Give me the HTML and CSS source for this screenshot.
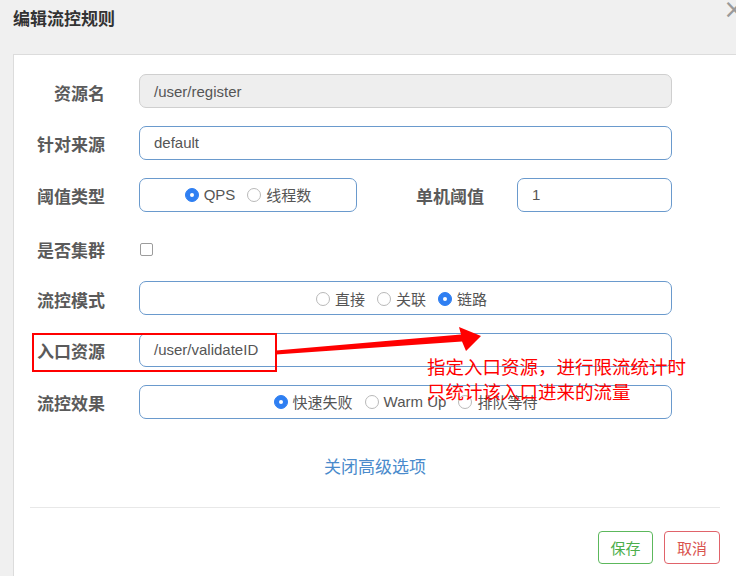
FILE: index.html
```html
<!DOCTYPE html>
<html lang="zh">
<head>
<meta charset="utf-8">
<title>编辑流控规则</title>
<link rel="stylesheet" href="styles.css">
</head>
<body>
<div class="page">
  <div class="header">
    <h4 class="title">编辑流控规则</h4>
    <span class="close">×</span>
  </div>
  <div class="card">
    <div class="form">
      <div class="row">
        <label class="lbl">资源名</label>
        <div class="input disabled">/user/register</div>
      </div>
      <div class="row">
        <label class="lbl">针对来源</label>
        <div class="input">default</div>
      </div>
      <div class="row">
        <label class="lbl">阈值类型</label>
        <div class="group small">
          <span class="radio on"></span><span class="opt">QPS</span>
          <span class="radio"></span><span class="opt">线程数</span>
        </div>
        <label class="lbl2">单机阈值</label>
        <div class="input short">1</div>
      </div>
      <div class="row">
        <label class="lbl lbl-low">是否集群</label>
        <span class="checkbox"></span>
      </div>
      <div class="row">
        <label class="lbl">流控模式</label>
        <div class="group mode">
          <span class="radio"></span><span class="opt">直接</span>
          <span class="radio"></span><span class="opt">关联</span>
          <span class="radio on"></span><span class="opt">链路</span>
        </div>
      </div>
      <div class="row">
        <label class="lbl">入口资源</label>
        <div class="input">/user/validateID</div>
      </div>
      <div class="row">
        <label class="lbl">流控效果</label>
        <div class="group">
          <span class="radio on"></span><span class="opt">快速失败</span>
          <span class="radio"></span><span class="opt">Warm Up</span>
          <span class="radio"></span><span class="opt">排队等待</span>
        </div>
      </div>
    </div>
    <div class="adv"><a class="adv-link">关闭高级选项</a></div>
    <hr class="sep">
    <div class="footer">
      <button class="btn save">保存</button>
      <button class="btn cancel">取消</button>
    </div>
  </div>

  <div class="mark-box"></div>
  <svg class="arrow" width="736" height="576" viewBox="0 0 736 576" xmlns="http://www.w3.org/2000/svg">
    <polygon points="276,350.5 461,334.5 459,327 481,336 466,351 462,341.5 276,354.5" fill="#ff0000"/>
  </svg>
  <div class="note">指定入口资源，进行限流统计时<br>只统计该入口进来的流量</div>
</div>
</body>
</html>
```

FILE: styles.css
```css
* { box-sizing: border-box; }

body {
  margin: 0;
  width: 736px;
  height: 576px;
  overflow: hidden;
  background: #f0f0f0;
  font-family: "Liberation Sans", "Noto Sans CJK SC", sans-serif;
  color: #555;
}

.page {
  position: relative;
  width: 736px;
  height: 576px;
  display: flex;
  flex-direction: column;
}

.header {
  position: relative;
  flex: none;
  height: 54px;
  padding-left: 13px;
}

.title {
  margin: 0;
  padding-top: 8px;
  font-size: 17px;
  line-height: 20px;
  font-weight: bold;
  color: #333;
  font-family: "Noto Sans CJK SC", sans-serif;
}

.close {
  position: absolute;
  right: -9px;
  top: -4px;
  font-size: 26px;
  line-height: 26px;
  color: #9a9a9a;
  font-family: "DejaVu Sans", sans-serif;
}

.card {
  flex: 1;
  margin-left: 13px;
  background: #fff;
  border-left: 1px solid #dcdcdc;
  border-top: 1px solid #dcdcdc;
  padding-top: 19px;
}

.form {
  display: flex;
  flex-direction: column;
  gap: 17.8px;
}

.row {
  display: flex;
  align-items: center;
  height: 34px;
}

.lbl {
  flex: none;
  width: 125px;
  padding-right: 34px;
  padding-top: 2px;
  text-align: right;
  font-size: 17px;
  font-weight: bold;
  color: #5a5a5a;
  font-family: "Noto Sans CJK SC", sans-serif;
}

.lbl-low { padding-top: 6px; }

.lbl2 {
  flex: none;
  width: 160px;
  padding-right: 33px;
  padding-top: 2px;
  text-align: right;
  font-size: 17px;
  font-weight: bold;
  color: #5a5a5a;
  font-family: "Noto Sans CJK SC", sans-serif;
}

.input {
  width: 533px;
  height: 34px;
  border: 1px solid #6a9acd;
  border-radius: 7px;
  background: #fff;
  padding-left: 14px;
  display: flex;
  align-items: center;
  font-size: 15px;
  color: #555;
}

.input.disabled {
  background: #eeeeee;
  border-color: #cfcfcf;
}

.input.short { width: 155px; }

.group {
  width: 533px;
  height: 34px;
  border: 1px solid #6a9acd;
  border-radius: 7px;
  display: flex;
  align-items: center;
  justify-content: center;
  font-size: 15px;
  color: #555;
}

.group.small { width: 218px; }
.group.mode { padding-right: 8px; }

.radio {
  flex: none;
  width: 14px;
  height: 14px;
  border-radius: 50%;
  border: 1px solid #b9b9b9;
  background: #fff;
  margin-right: 5px;
  margin-top: 1px;
  position: relative;
}

.radio.on {
  border-color: #2f7ff2;
  background: #2f7ff2;
}

.radio.on::after {
  content: "";
  position: absolute;
  left: 4px;
  top: 4px;
  width: 4px;
  height: 4px;
  border-radius: 50%;
  background: #fff;
}

.opt {
  margin-right: 12px;
  font-family: "Liberation Sans", "Noto Sans CJK SC", sans-serif;
}

.opt:last-child { margin-right: 0; }

.checkbox {
  width: 13px;
  height: 13px;
  margin-left: 1px;
  margin-top: 6px;
  border: 1px solid #9c9c9c;
  border-radius: 2px;
  background: #fff;
}

.adv {
  margin-top: 35px;
  text-align: center;
  line-height: 24px;
  height: 24px;
}

.adv-link {
  font-size: 17px;
  color: #4a8bcc;
  font-family: "Noto Sans CJK SC", sans-serif;
}

.sep {
  margin: 29px 16px 0 16px;
  border: 0;
  border-top: 1px solid #e8e8e8;
  height: 0;
}

.footer {
  margin-top: 23px;
  display: flex;
  justify-content: flex-end;
  gap: 11px;
  padding-right: 16px;
}

.btn {
  height: 33px;
  padding: 0;
  background: #fff;
  border: 1px solid;
  border-radius: 4px;
  font-size: 15px;
  font-family: "Noto Sans CJK SC", sans-serif;
  line-height: 31px;
  white-space: nowrap;
  text-align: center;
}

.btn.save { border-color: #5cb85c; color: #4cae4c; width: 55px; }
.btn.cancel { border-color: #e0636a; color: #d9534f; width: 56px; }

.mark-box {
  position: absolute;
  left: 32px;
  top: 333px;
  width: 245px;
  height: 39px;
  border: 2px solid #ff0000;
}

.arrow {
  position: absolute;
  left: 0;
  top: 0;
  pointer-events: none;
}

.note {
  position: absolute;
  left: 427px;
  top: 354px;
  font-size: 18.5px;
  line-height: 25px;
  color: #ff0000;
  white-space: nowrap;
  font-family: "Noto Sans CJK SC", sans-serif;
}
```
